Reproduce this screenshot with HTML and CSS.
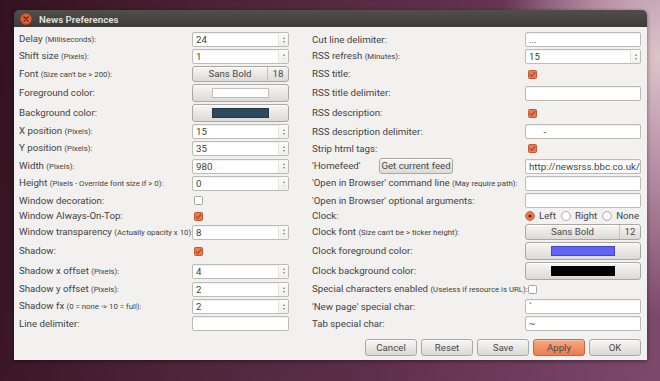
FILE: index.html
```html
<!DOCTYPE html>
<html lang="en">
<head>
  <meta charset="UTF-8">
  <meta name="viewport" content="width=device-width, initial-scale=1.0">
  <title>News Preferences</title>
  <link rel="stylesheet" href="styles.css">
</head>
<body>

  <div class="window">
    <div class="titlebar">
      <svg class="close" viewBox="0 0 12 12" width="12" height="12">
        <circle cx="6" cy="6" r="5.5" fill="#e65f33" stroke="#b8461f" stroke-width="0.8"/>
        <path d="M4 4 L8 8 M8 4 L4 8" stroke="#5a2614" stroke-width="1.3" stroke-linecap="round"/>
      </svg>
      <span class="title">News Preferences</span>
    </div>

    <div class="dialog">
      <div class="prefs">
        <!-- row 1 -->
        <div class="lbl">Delay <small>(Milliseconds):</small></div>
        <div class="spin"><span class="value">24</span><span class="arrows"><i class="up"></i><i class="down"></i></span></div>
        <div class="lbl right">Cut line delimiter:</div>
        <div class="entry">...</div>

        <!-- row 2 -->
        <div class="lbl">Shift size <small>(Pixels):</small></div>
        <div class="spin"><span class="value">1</span><span class="arrows"><i class="up"></i><i class="down off"></i></span></div>
        <div class="lbl right">RSS refresh <small>(Minutes):</small></div>
        <div class="spin"><span class="value">15</span><span class="arrows"><i class="up"></i><i class="down"></i></span></div>

        <!-- row 3 -->
        <div class="lbl">Font <small>(Size can't be &gt; 200):</small></div>
        <div class="btn fontbtn"><span class="face">Sans Bold</span><span class="size">18</span></div>
        <div class="lbl right">RSS title:</div>
        <div class="cell"><svg class="check on" viewBox="0 0 9 9"><rect x="0.5" y="0.5" width="8" height="8" rx="1"/><path d="M2 4.3 L3.9 6.4 L7.2 2.2"/></svg></div>

        <!-- row 4 -->
        <div class="lbl">Foreground color:</div>
        <div class="btn colorbtn"><span class="swatch" style="background: #ffffff"></span></div>
        <div class="lbl right">RSS title delimiter:</div>
        <div class="entry"></div>

        <!-- row 5 -->
        <div class="lbl">Background color:</div>
        <div class="btn colorbtn"><span class="swatch" style="background: #2e4a5c"></span></div>
        <div class="lbl right">RSS description:</div>
        <div class="cell"><svg class="check on" viewBox="0 0 9 9"><rect x="0.5" y="0.5" width="8" height="8" rx="1"/><path d="M2 4.3 L3.9 6.4 L7.2 2.2"/></svg></div>

        <!-- row 6 -->
        <div class="lbl">X position <small>(Pixels):</small></div>
        <div class="spin"><span class="value">15</span><span class="arrows"><i class="up"></i><i class="down"></i></span></div>
        <div class="lbl right">RSS description delimiter:</div>
        <div class="entry pre">      -</div>

        <!-- row 7 -->
        <div class="lbl">Y position <small>(Pixels):</small></div>
        <div class="spin"><span class="value">35</span><span class="arrows"><i class="up"></i><i class="down"></i></span></div>
        <div class="lbl right">Strip html tags:</div>
        <div class="cell"><svg class="check on" viewBox="0 0 9 9"><rect x="0.5" y="0.5" width="8" height="8" rx="1"/><path d="M2 4.3 L3.9 6.4 L7.2 2.2"/></svg></div>

        <!-- row 8 -->
        <div class="lbl">Width <small>(Pixels):</small></div>
        <div class="spin"><span class="value">980</span><span class="arrows"><i class="up"></i><i class="down"></i></span></div>
        <div class="lbl right homefeed"><span class="hf-name">'Homefeed'</span><span class="btn feedbtn">Get current feed</span></div>
        <div class="entry">http://newsrss.bbc.co.uk/rs</div>

        <!-- row 9 -->
        <div class="lbl">Height <small>(Pixels - Override font size if &gt; 0):</small></div>
        <div class="spin"><span class="value">0</span><span class="arrows"><i class="up"></i><i class="down off"></i></span></div>
        <div class="lbl right">'Open in Browser' command line <small>(May require path):</small></div>
        <div class="entry"></div>

        <!-- row 10 -->
        <div class="lbl">Window decoration:</div>
        <div class="cell"><svg class="check" viewBox="0 0 9 9"><rect x="0.5" y="0.5" width="8" height="8" rx="1"/></svg></div>
        <div class="lbl right">'Open in Browser' optional arguments:</div>
        <div class="entry"></div>

        <!-- row 11 -->
        <div class="lbl">Window Always-On-Top:</div>
        <div class="cell"><svg class="check on" viewBox="0 0 9 9"><rect x="0.5" y="0.5" width="8" height="8" rx="1"/><path d="M2 4.3 L3.9 6.4 L7.2 2.2"/></svg></div>
        <div class="lbl right">Clock:</div>
        <div class="radios">
          <span class="radio-item"><svg class="radio on" viewBox="0 0 10 10"><circle cx="5" cy="5" r="4.4"/><circle class="dot" cx="5" cy="5" r="1.6"/></svg>Left</span>
          <span class="radio-item"><svg class="radio" viewBox="0 0 10 10"><circle cx="5" cy="5" r="4.4"/></svg>Right</span>
          <span class="radio-item"><svg class="radio" viewBox="0 0 10 10"><circle cx="5" cy="5" r="4.4"/></svg>None</span>
        </div>

        <!-- row 12 -->
        <div class="lbl">Window transparency <small>(Actually opacity x 10):</small></div>
        <div class="spin"><span class="value">8</span><span class="arrows"><i class="up"></i><i class="down"></i></span></div>
        <div class="lbl right">Clock font <small>(Size can't be &gt; ticker height):</small></div>
        <div class="btn fontbtn"><span class="face">Sans Bold</span><span class="size">12</span></div>

        <!-- row 13 -->
        <div class="lbl">Shadow:</div>
        <div class="cell"><svg class="check on" viewBox="0 0 9 9"><rect x="0.5" y="0.5" width="8" height="8" rx="1"/><path d="M2 4.3 L3.9 6.4 L7.2 2.2"/></svg></div>
        <div class="lbl right">Clock foreground color:</div>
        <div class="btn colorbtn wide"><span class="swatch" style="background: #6262fa"></span></div>

        <!-- row 14 -->
        <div class="lbl">Shadow x offset <small>(Pixels):</small></div>
        <div class="spin"><span class="value">4</span><span class="arrows"><i class="up"></i><i class="down"></i></span></div>
        <div class="lbl right">Clock background color:</div>
        <div class="btn colorbtn wide"><span class="swatch" style="background: #000000"></span></div>

        <!-- row 15 -->
        <div class="lbl">Shadow y offset <small>(Pixels):</small></div>
        <div class="spin"><span class="value">2</span><span class="arrows"><i class="up"></i><i class="down"></i></span></div>
        <div class="lbl right">Special characters enabled <small>(Useless if resource is URL):</small></div>
        <div class="cell"><svg class="check" viewBox="0 0 9 9"><rect x="0.5" y="0.5" width="8" height="8" rx="1"/></svg></div>

        <!-- row 16 -->
        <div class="lbl">Shadow fx <small>(0 = none -&gt; 10 = full):</small></div>
        <div class="spin"><span class="value">2</span><span class="arrows"><i class="up"></i><i class="down"></i></span></div>
        <div class="lbl right">'New page' special char:</div>
        <div class="entry">`</div>

        <!-- row 17 -->
        <div class="lbl">Line delimiter:</div>
        <div class="entry"></div>
        <div class="lbl right">Tab special char:</div>
        <div class="entry">~</div>
      </div>

      <div class="actions">
        <button type="button" class="btn action">Cancel</button>
        <button type="button" class="btn action">Reset</button>
        <button type="button" class="btn action">Save</button>
        <button type="button" class="btn action apply">Apply</button>
        <button type="button" class="btn action">OK</button>
      </div>
    </div>
  </div>

</body>
</html>
```

FILE: styles.css
```css
html, body {
  height: 100%;
}
body {
  margin: 0;
  padding: 10px 0 0 14px;
  box-sizing: border-box;
  font-family: Roboto, "Open Sans", sans-serif;
  color: #424240;
  background:
    radial-gradient(ellipse 160px 260px at 100% 15%, #dcc4cb 0%, #b58ba3 45%, rgba(140, 90, 120, 0) 100%),
    linear-gradient(100deg, #33121f 0%, #4d2237 30%, #5e2f4c 60%, #7d4a6c 100%);
  overflow: hidden;
}
.window {
  width: 633px;
  border-radius: 5px 5px 0 0;
  box-shadow: 0 1px 4px rgba(0, 0, 0, 0.45);
}
.titlebar {
  height: 17px;
  display: flex;
  align-items: center;
  padding-left: 6px;
  gap: 7px;
  border-radius: 5px 5px 0 0;
  background: linear-gradient(#504f4b, #3c3b37);
}
.close {
  display: block;
}
.title {
  color: #dfdbd2;
  font-weight: bold;
  font-size: 9.7px;
  padding-top: 1px;
}
.dialog {
  background-color: #f2f1f0;
  padding: 5px 6px 4px 5px;
}
.prefs {
  display: grid;
  grid-template-columns: 173px 97px 236px 116px;
  row-gap: 2px;
  align-items: center;
}
.lbl {
  font-size: 9.7px;
  line-height: 12px;
  white-space: nowrap;
}
.lbl small {
  font-size: 7.8px;
}
.lbl.right {
  padding-left: 23px;
}
.homefeed {
  display: flex;
  align-items: center;
}
.hf-name {
  width: 67px;
}
.cell {
  display: flex;
  align-items: center;
  padding-left: 2px;
}
.prefs > .cell:nth-child(4n) {
  padding-left: 3px;
}
.entry, .spin {
  height: 15px;
  box-sizing: border-box;
  border: 1px solid #bdbbb6;
  border-radius: 2px;
  background-color: #fff;
  font-size: 9.7px;
  line-height: 13px;
  box-shadow: inset 0 1px 1px rgba(0, 0, 0, 0.06);
}
.entry {
  padding-left: 3px;
  white-space: nowrap;
  overflow: hidden;
}
.entry.pre {
  white-space: pre;
}
.spin {
  display: flex;
}
.spin .value {
  flex: 1;
  padding-left: 3px;
}
.spin .arrows {
  width: 9px;
  border-left: 1px solid #e6e5e2;
  display: flex;
  flex-direction: column;
  align-items: center;
  justify-content: center;
  gap: 2px;
  background: linear-gradient(#fbfbfa, #f0efed);
}
.spin .up {
  width: 0;
  height: 0;
  border-left: 1.5px solid transparent;
  border-right: 1.5px solid transparent;
  border-bottom: 2px solid #7a7975;
}
.spin .down {
  width: 0;
  height: 0;
  border-left: 1.5px solid transparent;
  border-right: 1.5px solid transparent;
  border-top: 2px solid #7a7975;
}
.spin .down.off {
  border-top-color: #d3d1cd;
}
.btn {
  box-sizing: border-box;
  border: 1px solid #aaa8a3;
  border-radius: 3px;
  background: linear-gradient(#f7f6f5, #dcdad6);
  font-family: Roboto, "Open Sans", sans-serif;
  font-size: 9.7px;
  color: #4a4a48;
  box-shadow: inset 0 1px 0 rgba(255, 255, 255, 0.7);
}
.fontbtn {
  height: 16px;
  display: flex;
  align-items: center;
  line-height: 14px;
}
.fontbtn .face {
  flex: 1;
  text-align: center;
}
.fontbtn .size {
  width: 20px;
  text-align: center;
  border-left: 1px solid #c4c2bd;
}
.colorbtn {
  height: 18px;
  display: flex;
  align-items: center;
  padding: 0 19px;
}
.colorbtn.wide {
  padding: 0 25px;
}
.swatch {
  flex: 1;
  height: 10px;
  box-sizing: border-box;
  border: 1px solid rgba(0, 0, 0, 0.25);
}
.feedbtn {
  width: 74px;
  height: 16px;
  line-height: 14px;
  text-align: center;
}
.check {
  width: 9px;
  height: 9px;
  display: block;
}
.check rect {
  fill: #fff;
  stroke: #a5a39e;
  stroke-width: 1;
}
.check.on rect {
  fill: #ec7a4c;
  stroke: #c25a30;
}
.check path {
  fill: none;
  stroke: #7a351b;
  stroke-opacity: 0.65;
  stroke-width: 1.2;
}
.radios {
  display: flex;
  align-items: center;
  font-size: 9.7px;
  line-height: 12px;
  white-space: nowrap;
}
.radio-item {
  display: flex;
  align-items: center;
  gap: 4px;
  margin-right: 5px;
}
.radio-item:last-child {
  margin-right: 0;
}
.radio {
  width: 10px;
  height: 10px;
  display: block;
}
.radio circle {
  fill: #fff;
  stroke: #a5a39e;
  stroke-width: 0.9;
}
.radio.on circle {
  fill: #ec7a4c;
  stroke: #c25a30;
}
.radio.on .dot {
  fill: #5b2714;
  stroke: none;
}
.actions {
  display: flex;
  justify-content: flex-end;
  gap: 4px;
  margin-top: 8px;
}
.action {
  width: 52px;
  height: 17px;
  padding: 0;
  cursor: pointer;
}
.apply {
  background: linear-gradient(#f7a882, #ec7b4c);
  border-color: #c8683f;
  box-shadow: inset 0 1px 0 rgba(255, 255, 255, 0.35);
}
```
